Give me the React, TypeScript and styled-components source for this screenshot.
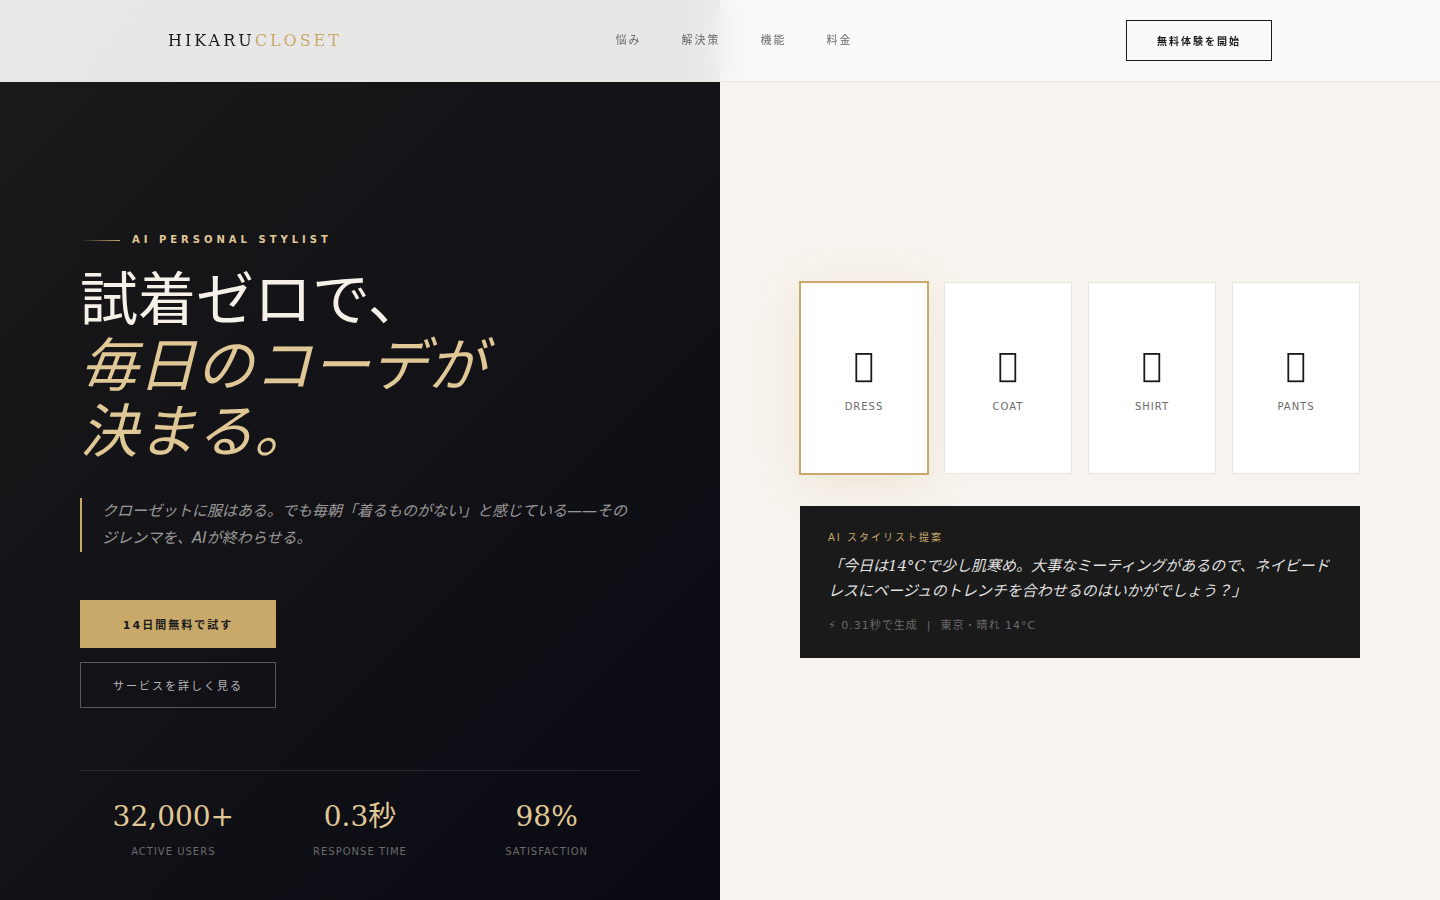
import React from 'react';
import styled, { createGlobalStyle } from 'styled-components';

const sans = '"DejaVu Sans", "Noto Sans CJK JP", sans-serif';
const serif = '"DejaVu Serif", "Noto Sans CJK JP", serif';

const color = {
  ink: '#1a1a1a',
  gold: '#c8a96a',
  goldLight: '#e0c896',
  ivory: '#f5f0e8',
  cream: '#f7f3ee',
  line: '#e8e4de',
  grey: '#6b6b6b',
};

const GlobalStyle = createGlobalStyle`
  *, *::before, *::after { box-sizing: border-box; }
  body {
    margin: 0;
    background: #fafaf8;
    color: ${color.ink};
    font-family: ${sans};
  }
  h1, p, dl, dd, dt, ul, figure, blockquote { margin: 0; padding: 0; }
`;

const Header = styled.header`
  position: fixed;
  top: 0;
  left: 0;
  right: 0;
  z-index: 10;
  background: rgba(250, 250, 248, 0.92);
  backdrop-filter: blur(16px);
  border-bottom: 1px solid ${color.line};
`;

const HeaderInner = styled.div`
  display: flex;
  align-items: center;
  justify-content: space-between;
  max-width: 1200px;
  margin: 0 auto;
  padding: 20px 48px;
`;

const Logo = styled.a`
  font-family: ${serif};
  font-size: 16px;
  line-height: 26px;
  letter-spacing: 3px;
  color: ${color.ink};
  text-decoration: none;

  span { color: ${color.gold}; }
`;

const NavList = styled.ul`
  display: flex;
  gap: 40px;
  list-style: none;
`;

const NavLink = styled.a`
  display: block;
  font-size: 11px;
  line-height: 20px;
  letter-spacing: 2px;
  color: ${color.grey};
  text-decoration: none;
`;

const TrialButton = styled.button`
  padding: 13px 30px 11px;
  border: 1px solid ${color.ink};
  background: transparent;
  color: ${color.ink};
  font: bold 10px/15px ${sans};
  letter-spacing: 2px;
`;

const Hero = styled.main`
  display: grid;
  grid-template-columns: 1fr 1fr;
  min-height: 100vh;
`;

const Story = styled.section`
  display: flex;
  flex-direction: column;
  justify-content: flex-end;
  padding: 120px 80px 40px;
  background: linear-gradient(135deg, #1a1a1a 0%, #0a0a14 100%);
`;

const Eyebrow = styled.p`
  display: flex;
  align-items: center;
  gap: 12px;
  margin-bottom: 19px;
  font-size: 10px;
  font-weight: bold;
  line-height: 16px;
  letter-spacing: 4px;
  color: ${color.goldLight};

  &::before {
    content: '';
    width: 40px;
    height: 1px;
    background: linear-gradient(90deg, transparent, ${color.gold});
  }
`;

const Title = styled.h1`
  margin-bottom: 33px;
  font-family: ${serif};
  font-size: 58px;
  font-weight: 400;
  line-height: 66px;
  color: ${color.ivory};

  em { color: ${color.goldLight}; }
`;

const Lead = styled.p`
  margin-bottom: 48px;
  padding-left: 20px;
  border-left: 2px solid ${color.gold};
  font-size: 15px;
  font-style: italic;
  line-height: 27px;
  color: rgba(247, 243, 238, 0.6);
`;

const Actions = styled.div`
  display: flex;
  flex-direction: column;
  align-self: flex-start;
  gap: 14px;
  margin-bottom: 62px;
`;

const ActionButton = styled.button<{ $primary?: boolean }>`
  padding: ${p => (p.$primary ? '18px 40px 14px' : '16px 32px 12px')};
  border: ${p => (p.$primary ? 'none' : '1px solid rgba(255, 255, 255, 0.3)')};
  background: ${p => (p.$primary ? color.gold : 'transparent')};
  color: ${p => (p.$primary ? color.ink : 'rgba(255, 255, 255, 0.7)')};
  font: ${p => (p.$primary ? 'bold' : 'normal')} 11px/16px ${sans};
  letter-spacing: 2px;
`;

const Stats = styled.dl`
  display: grid;
  grid-template-columns: repeat(3, 1fr);
  border-top: 1px solid rgba(255, 255, 255, 0.1);
  padding-top: 28px;
`;

const Stat = styled.div`
  display: flex;
  flex-direction: column-reverse;
  gap: 9px;
  text-align: center;
`;

const StatValue = styled.dd`
  font-family: ${serif};
  font-size: 28px;
  line-height: 36px;
  color: ${color.goldLight};
`;

const StatLabel = styled.dt`
  font-size: 10px;
  line-height: 16px;
  letter-spacing: 1px;
  color: ${color.grey};
`;

const Showcase = styled.section`
  display: flex;
  flex-direction: column;
  justify-content: center;
  gap: 32px;
  padding: 120px 80px 80px;
  background: ${color.cream};
`;

const Garments = styled.ul`
  display: grid;
  grid-template-columns: repeat(4, 1fr);
  gap: 16px;
  list-style: none;
`;

const Garment = styled.li<{ $selected?: boolean }>`
  display: flex;
  flex-direction: column;
  align-items: center;
  justify-content: center;
  gap: 16px;
  aspect-ratio: 2 / 3;
  padding-top: 12px;
  border: 1px solid ${p => (p.$selected ? color.gold : color.line)};
  background: #fff;
  box-shadow: ${p =>
    p.$selected ? `0 0 0 1px ${color.gold}, 0 8px 40px rgba(200, 169, 106, 0.2)` : 'none'};
`;

const GarmentIcon = styled.svg`
  display: block;
  width: 18px;
  height: 30px;
  fill: none;
  stroke: ${color.ink};
`;

const GarmentName = styled.span`
  font-size: 10px;
  line-height: 16px;
  letter-spacing: 1px;
  color: ${color.grey};
`;

const Suggestion = styled.figure`
  padding: 24px 28px;
  background: ${color.ink};
`;

const SuggestionLabel = styled.figcaption`
  margin-bottom: 8px;
  font-size: 10px;
  line-height: 16px;
  letter-spacing: 2px;
  color: ${color.gold};
`;

const SuggestionText = styled.blockquote`
  margin-bottom: 14px;
  font-family: ${serif};
  font-size: 15px;
  font-style: italic;
  line-height: 25px;
  color: rgba(255, 255, 255, 0.88);
`;

const SuggestionMeta = styled.p`
  font-size: 11px;
  line-height: 16px;
  letter-spacing: 1px;
  color: ${color.grey};
  white-space: pre-wrap;
`;

const navItems = ['悩み', '解決策', '機能', '料金'];

const stats = [
  { value: '32,000+', label: 'ACTIVE USERS' },
  { value: '0.3秒', label: 'RESPONSE TIME' },
  { value: '98%', label: 'SATISFACTION' },
];

const garments = ['DRESS', 'COAT', 'SHIRT', 'PANTS'];

export default function App() {
  return (
    <div lang="ja">
      <GlobalStyle />
      <Header>
        <HeaderInner>
          <Logo href="#top">HIKARU<span>CLOSET</span></Logo>
          <nav>
            <NavList>
              {navItems.map(item => (
                <li key={item}><NavLink href={`#${item}`}>{item}</NavLink></li>
              ))}
            </NavList>
          </nav>
          <TrialButton type="button">無料体験を開始</TrialButton>
        </HeaderInner>
      </Header>
      <Hero id="top">
        <Story>
          <Eyebrow>AI PERSONAL STYLIST</Eyebrow>
          <Title>
            試着ゼロで、<br />
            <em>毎日のコーデが<br />決まる。</em>
          </Title>
          <Lead>
            クローゼットに服はある。でも毎朝「着るものがない」と感じている——そのジレンマを、AIが終わらせる。
          </Lead>
          <Actions>
            <ActionButton type="button" $primary>14日間無料で試す</ActionButton>
            <ActionButton type="button">サービスを詳しく見る</ActionButton>
          </Actions>
          <Stats>
            {stats.map(stat => (
              <Stat key={stat.label}>
                <StatLabel>{stat.label}</StatLabel>
                <StatValue>{stat.value}</StatValue>
              </Stat>
            ))}
          </Stats>
        </Story>
        <Showcase>
          <Garments>
            {garments.map((name, index) => (
              <Garment key={name} $selected={index === 0}>
                <GarmentIcon viewBox="0 0 18 30" aria-hidden="true">
                  <rect x="1.3" y="0.9" width="15" height="27.4" strokeWidth="1.8" />
                </GarmentIcon>
                <GarmentName>{name}</GarmentName>
              </Garment>
            ))}
          </Garments>
          <Suggestion>
            <SuggestionLabel>AI スタイリスト提案</SuggestionLabel>
            <SuggestionText>
              「今日は14°Cで少し肌寒め。大事なミーティングがあるので、ネイビードレスにベージュのトレンチを合わせるのはいかがでしょう？」
            </SuggestionText>
            <SuggestionMeta>{'⚡ 0.31秒で生成  |  東京・晴れ 14°C'}</SuggestionMeta>
          </Suggestion>
        </Showcase>
      </Hero>
    </div>
  );
}
